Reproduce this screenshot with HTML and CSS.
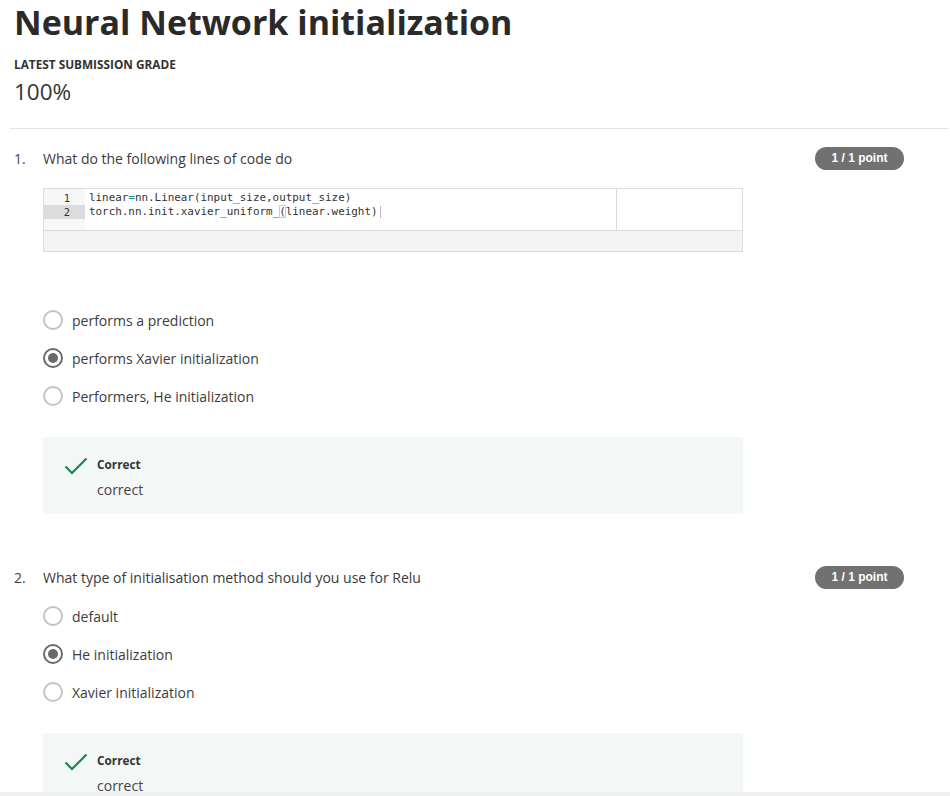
FILE: index.html
```html
<!DOCTYPE html>
<html>
<head>
<meta charset="utf-8">
<link rel="stylesheet" href="styles.css">
</head>
<body>
<div class="page">
  <h1 class="title">Neural Network initialization</h1>
  <div class="grade-label">LATEST SUBMISSION GRADE</div>
  <div class="grade">100%</div>
  <hr class="rule">

  <section class="question">
    <div class="q-head">
      <span class="q-num">1.</span>
      <span class="q-text">What do the following lines of code do</span>
      <span class="badge">1 / 1 point</span>
    </div>
    <div class="code">
      <div class="editor">
        <div class="gutter">
          <div class="ln">1</div>
          <div class="ln active">2</div>
        </div>
        <div class="lines">
          <div class="cl">linear<span class="op">=</span>nn.Linear(input_size,output_size)</div>
          <div class="cl">torch.nn.init.xavier_uniform_<span class="cursor">(</span>linear.weight)<span class="caret"></span></div>
          <div class="margin"></div>
        </div>
      </div>
      <div class="code-foot"></div>
    </div>
    <div class="options first">
      <div class="opt"><span class="radio"></span>performs a prediction</div>
      <div class="opt"><span class="radio checked"></span>performs Xavier initialization</div>
      <div class="opt"><span class="radio"></span>Performers, He initialization</div>
    </div>
    <div class="feedback">
      <svg class="check" width="24" height="18" viewBox="0 0 24 18"><path d="M1.5 9.5 L8 16 L22.5 1.5" fill="none" stroke="#1f8354" stroke-width="2.2"/></svg>
      <div class="fb-text">
        <div class="fb-title">Correct</div>
        <div class="fb-body">correct</div>
      </div>
    </div>
  </section>

  <section class="question q2">
    <div class="q-head">
      <span class="q-num">2.</span>
      <span class="q-text">What type of initialisation method should you use for Relu</span>
      <span class="badge">1 / 1 point</span>
    </div>
    <div class="options">
      <div class="opt"><span class="radio"></span>default</div>
      <div class="opt"><span class="radio checked"></span>He initialization</div>
      <div class="opt"><span class="radio"></span>Xavier initialization</div>
    </div>
    <div class="feedback">
      <svg class="check" width="24" height="18" viewBox="0 0 24 18"><path d="M1.5 9.5 L8 16 L22.5 1.5" fill="none" stroke="#1f8354" stroke-width="2.2"/></svg>
      <div class="fb-text">
        <div class="fb-title">Correct</div>
        <div class="fb-body">correct</div>
      </div>
    </div>
  </section>
</div>
<div class="hbar"></div>
</body>
</html>
```

FILE: styles.css
```css
html, body {
  margin: 0;
  padding: 0;
  height: 796px;
  overflow: hidden;
  background: #fff;
}
body {
  font-family: "Open Sans", "Noto Sans", sans-serif;
  color: #373a3c;
  position: relative;
}
.page {
  padding: 0 0 0 14px;
}
.title {
  margin: 0;
  padding-top: 1px;
  font-size: 34px;
  font-weight: 700;
  line-height: 43px;
  color: #2a2a2a;
  letter-spacing: 0;
}
.grade-label {
  margin-top: 12px;
  font-size: 11.8px;
  font-weight: 700;
  line-height: 16px;
  color: #333;
}
.grade {
  margin-top: 5px;
  font-size: 22.5px;
  line-height: 30px;
  color: #333;
}
.rule {
  margin: 21px 0 0 -4px;
  width: 938px;
  border: 0;
  border-top: 1px solid #e2e2e2;
}
.question {
  padding-top: 19px;
}
.q2 {
  padding-top: 53px;
}
.q-head {
  display: flex;
  align-items: center;
  height: 20px;
  font-size: 14px;
  color: #3a3a3a;
}
.q-num {
  width: 29px;
  color: #444;
}
.q-text {
  flex: 1;
}
.badge {
  margin-right: 46px;
  width: 89px;
  height: 23px;
  border-radius: 12px;
  background: #717171;
  color: #fff;
  font-family: "Liberation Sans", Arial, sans-serif;
  font-weight: 700;
  font-size: 12px;
  line-height: 23px;
  text-align: center;
}
.code {
  margin: 20px 0 0 29px;
  width: 698px;
  border: 1px solid #dcdcdc;
}
.editor {
  display: flex;
  height: 41px;
  border-bottom: 1px solid #dcdcdc;
  background: #fff;
}
.gutter {
  width: 41px;
  background: #f7f7f7;
  padding-top: 2px;
}
.ln {
  height: 14px;
  line-height: 14px;
  font-family: "DejaVu Sans Mono", "Liberation Mono", monospace;
  font-size: 10.5px;
  text-align: right;
  padding-right: 15px;
  color: #333;
}
.ln.active {
  background: #dcdcdc;
}
.lines {
  position: relative;
  flex: 1;
  padding-left: 4px;
  padding-top: 2px;
}
.cl {
  height: 14px;
  line-height: 14px;
  font-family: "DejaVu Sans Mono", "Liberation Mono", monospace;
  font-size: 10.9px;
  color: #333;
  white-space: pre;
}
.op {
  color: #1a8f8f;
}
.cursor {
  outline: 1px solid #ccc;
  outline-offset: -1px;
}
.caret {
  display: inline-block;
  width: 1px;
  height: 12px;
  background: #bbb;
  vertical-align: middle;
  margin-left: 2px;
}
.margin {
  position: absolute;
  top: 0;
  bottom: 0;
  left: 531px;
  width: 1px;
  background: #d0dde6;
}
.code-foot {
  height: 20px;
  background: #f3f3f3;
}
.options {
  margin-left: 29px;
  margin-top: 58px;
  display: flex;
  flex-direction: column;
  gap: 18px;
}
.q2 .options {
  margin-top: 19px;
}
.opt {
  display: flex;
  align-items: center;
  height: 20px;
  font-size: 14px;
  color: #3c3c3c;
}
.radio {
  box-sizing: border-box;
  width: 20px;
  height: 20px;
  border: 2px solid #c4c4c4;
  border-radius: 50%;
  margin-right: 9px;
  position: relative;
  flex: none;
}
.radio.checked {
  border-color: #6a6a6a;
}
.radio.checked::after {
  content: "";
  position: absolute;
  left: 3px;
  top: 3px;
  width: 10px;
  height: 10px;
  border-radius: 50%;
  background: #6a6a6a;
}
.feedback {
  margin: 31px 0 0 29px;
  width: 700px;
  height: 77px;
  box-sizing: border-box;
  background: #f3f8f6;
  display: flex;
  align-items: flex-start;
  padding: 19px 0 0 21px;
}
.q2 .feedback {
  margin-top: 31px;
}
.check {
  margin-top: 1px;
  margin-right: 9px;
}
.fb-title {
  font-size: 11.8px;
  font-weight: 700;
  line-height: 16px;
  color: #333;
}
.fb-body {
  margin-top: 9px;
  font-size: 14px;
  line-height: 18px;
  color: #444;
}
.hbar {
  position: absolute;
  left: 0;
  right: 0;
  top: 792px;
  height: 4px;
  background: #f0f0f0;
}
```
